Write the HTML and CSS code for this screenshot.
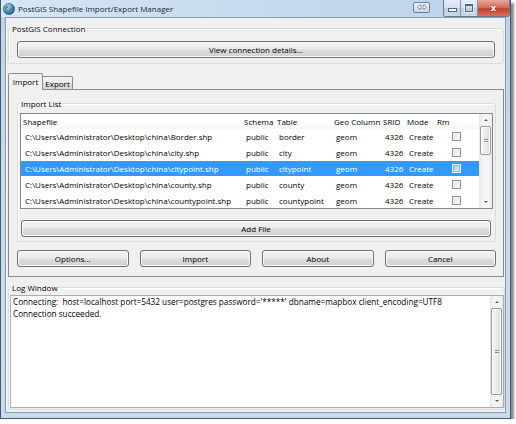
FILE: index.html
```html
<!DOCTYPE html>
<html>
<head>
<meta charset="utf-8">
<link rel="stylesheet" href="styles.css">
</head>
<body>
<div class="window">
  <div class="titlebar">
    <svg class="appicon" width="12" height="12" viewBox="0 0 12 12">
      <defs>
        <radialGradient id="g" cx="0.35" cy="0.3" r="0.8">
          <stop offset="0" stop-color="#bfe3ff"/>
          <stop offset="0.6" stop-color="#3b7fc4"/>
          <stop offset="1" stop-color="#1d4f8a"/>
        </radialGradient>
      </defs>
      <circle cx="6" cy="6" r="5.6" fill="url(#g)" stroke="#2c4f78" stroke-width="0.6"/>
      <path d="M3 3.2 C4.2 2.4 5.6 3 5.2 4.2 C4.8 5.2 3.6 5 3.4 6.2 C3.2 7.2 2.2 6.6 1.8 5.6 C1.6 4.6 2.2 3.8 3 3.2Z" fill="#4f9a3a"/>
      <path d="M6.8 5.6 C8 5.2 9.6 5.8 9.4 7.2 C9.2 8.6 7.8 9.6 7 8.8 C6.4 8 6.2 6.2 6.8 5.6Z" fill="#4f9a3a"/>
    </svg>
    <span class="title">PostGIS Shapefile Import/Export Manager</span>
    <span class="extbtn">
      <svg width="10" height="6" viewBox="0 0 10 6"><path d="M0.5 3 L3 0.5 L3 2 L7 2 L7 0.5 L9.5 3 L7 5.5 L7 4 L3 4 L3 5.5 Z" fill="#fff" stroke="#5a6b80" stroke-width="0.7"/></svg>
    </span>
    <div class="capbtns">
      <span class="cb cmin"><span class="gmin"></span></span>
      <span class="cb cmax"><span class="gmax"></span></span>
      <span class="cb cclose">x</span>
    </div>
  </div>
  <div class="client">
    <fieldset class="group conn">
      <legend>PostGIS Connection</legend>
      <div class="conn-body">
        <div class="btn">View connection details...</div>
      </div>
    </fieldset>

    <div class="tabs">
      <span class="tab sel">Import</span>
      <span class="tab">Export</span>
    </div>
    <div class="pane">
      <fieldset class="group list">
        <legend>Import List</legend>
        <div class="list-body">
          <div class="table">
            <div class="rows">
              <div class="row head">
                <span>Shapefile</span><span>Schema</span><span>Table</span><span>Geo Column</span><span>SRID</span><span>Mode</span><span>Rm</span>
              </div>
              <div class="row">
                <span>C:\Users\Administrator\Desktop\china\Border.shp</span><span>public</span><span>border</span><span>geom</span><span>4326</span><span>Create</span><span><i class="chk"></i></span>
              </div>
              <div class="row">
                <span>C:\Users\Administrator\Desktop\china\city.shp</span><span>public</span><span>city</span><span>geom</span><span>4326</span><span>Create</span><span><i class="chk"></i></span>
              </div>
              <div class="row selrow">
                <span>C:\Users\Administrator\Desktop\china\citypoint.shp</span><span>public</span><span>citypoint</span><span>geom</span><span>4326</span><span>Create</span><span><i class="chk"></i></span>
              </div>
              <div class="row">
                <span>C:\Users\Administrator\Desktop\china\county.shp</span><span>public</span><span>county</span><span>geom</span><span>4326</span><span>Create</span><span><i class="chk"></i></span>
              </div>
              <div class="row">
                <span>C:\Users\Administrator\Desktop\china\countypoint.shp</span><span>public</span><span>countypoint</span><span>geom</span><span>4326</span><span>Create</span><span><i class="chk"></i></span>
              </div>
            </div>
            <div class="vscroll small">
              <span class="arrow up"><i></i></span>
              <span class="thumb t1"><i class="grip"></i></span>
              <span class="track"></span>
              <span class="arrow down"><i></i></span>
            </div>
          </div>
          <div class="btn addfile">Add File</div>
        </div>
      </fieldset>
      <div class="btnrow">
        <div class="btn">Options...</div>
        <div class="btn">Import</div>
        <div class="btn">About</div>
        <div class="btn">Cancel</div>
      </div>
    </div>

    <fieldset class="group log">
      <legend>Log Window</legend>
      <div class="logbox">
        <div class="logtext">Connecting:  host=localhost port=5432 user=postgres password='*****' dbname=mapbox client_encoding=UTF8
Connection succeeded.</div>
        <div class="vscroll big">
          <span class="arrow up"><i></i></span>
          <span class="thumb t2"><i class="grip"></i></span>
          <span class="arrow down"><i></i></span>
        </div>
      </div>
    </fieldset>
  </div>
</div>
</body>
</html>
```

FILE: styles.css
```css
html, body {
  margin: 0;
  padding: 0;
  background: #ffffff;
}
body {
  font-family: "Open Sans", "Noto Sans", "DejaVu Sans", sans-serif;
  font-size: 8px;
  color: #000;
}
.window {
  width: 511px;
  height: 419px;
  box-sizing: border-box;
  border: 1px solid #48576a;
  border-top: none;
  background: linear-gradient(to bottom, #bcd3eb 0%, #c6daef 40%, #cadcef 100%);
  box-shadow: 3px 3px 2px rgba(0, 0, 0, 0.45);
  display: flex;
  flex-direction: column;
}
.titlebar {
  height: 17px;
  display: flex;
  align-items: center;
  padding-left: 1px;
  background: linear-gradient(to right, #d6e6f5 0%, #c9dcf0 40%, #bcd3ea 100%);
}
.appicon {
  margin-left: 1px;
  margin-right: 3px;
  flex: none;
}
.title {
  font-size: 8px;
  color: #1b2836;
  white-space: nowrap;
}
.extbtn {
  margin-left: auto;
  width: 17px;
  height: 11px;
  margin-top: -3px;
  border: 1px solid #6d7e93;
  border-radius: 2px;
  background: linear-gradient(to bottom, #eef3f9, #c8d6e6);
  display: flex;
  align-items: center;
  justify-content: center;
  box-sizing: border-box;
}
.capbtns {
  margin-left: 13px;
  display: flex;
  align-self: flex-start;
  height: 16px;
  border: 1px solid #6a7b90;
  border-top: none;
  border-radius: 0 0 3px 3px;
  overflow: hidden;
}
.cb {
  height: 16px;
  box-sizing: border-box;
  display: flex;
  align-items: center;
  justify-content: center;
}
.cmin, .cmax {
  width: 17px;
  background: linear-gradient(to bottom, #e6edf6 0%, #d3dfec 50%, #bccde1 51%, #cbd9e9 100%);
  border-right: 1px solid #8496ab;
}
.gmin {
  width: 7px;
  height: 2px;
  margin-top: 4px;
  background: #fff;
  border: 1px solid #52667f;
}
.gmax {
  width: 6px;
  height: 5px;
  border: 1px solid #52667f;
  border-top-width: 2px;
  background: transparent;
  box-shadow: 0 0 0 1px rgba(255,255,255,0.7);
}
.cclose {
  width: 31px;
  background: linear-gradient(to bottom, #e8a89c 0%, #d6715f 45%, #c1402c 55%, #d9705d 100%);
  color: #fff;
  font-family: "DejaVu Sans", sans-serif;
  font-weight: bold;
  font-size: 9px;
  line-height: 1;
  text-shadow: 0 0 2px #6b1a10;
}
.client {
  flex: 1;
  margin: 0 4px 5px 4px;
  border: 1px solid #8b9bb0;
  background: #f0f0f0;
  display: flex;
  flex-direction: column;
}

/* group boxes */
fieldset.group {
  border: 1px solid #d5dfe5;
  border-radius: 3px;
  padding: 0;
  min-width: 0;
  box-shadow: inset 1px 1px 0 #fff;
}
fieldset.group legend {
  padding: 0 1px;
  margin-left: 2px;
  line-height: 11px;
  font-size: 8px;
}
.conn {
  margin: 5px 1px 0 2px;
}
.conn-body {
  padding: 7px 8px 5px 8px;
}

/* buttons */
.btn {
  height: 17px;
  box-sizing: border-box;
  border: 1px solid #707070;
  border-radius: 3px;
  background: linear-gradient(to bottom, #f3f3f3 0%, #ebebeb 49%, #dddddd 51%, #d0d0d0 100%);
  box-shadow: inset 0 0 0 1px #fafafa;
  display: flex;
  align-items: center;
  justify-content: center;
  white-space: nowrap;
  line-height: 1;
}

/* tabs */
.tabs {
  margin: 9px 0 0 2px;
  display: flex;
  align-items: flex-end;
  height: 16px;
}
.tab {
  box-sizing: border-box;
  border: 1px solid #898c95;
  border-bottom: none;
  display: flex;
  align-items: center;
  justify-content: center;
}
.tab.sel {
  width: 35px;
  height: 17px;
  margin-bottom: -1px;
  background: #f0f0f0;
  border-radius: 2px 2px 0 0;
  position: relative;
  padding-bottom: 2px;
}
.tab:not(.sel) {
  width: 30px;
  height: 13px;
  border-left: none;
  background: linear-gradient(to bottom, #f3f3f3 0%, #ebebeb 50%, #dedede 51%, #d7d7d7 100%);
  border-radius: 0 2px 0 0;
}
.pane {
  margin: 0 1px 0 2px;
  border: 1px solid #898c95;
  background: #f0f0f0;
  display: flex;
  flex-direction: column;
}
.list {
  margin: 8px 7px 0 8px;
}
.list-body {
  padding: 4px 2px 4px 2px;
}
.table {
  height: 96px;
  box-sizing: border-box;
  border: 1px solid #828790;
  background: #fff;
  display: flex;
}
.rows {
  flex: 1;
  display: flex;
  flex-direction: column;
  min-width: 0;
}
.row {
  display: grid;
  grid-template-columns: 221px 33px 57px 49px 24px 30px 1fr;
  height: 16px;
  align-items: center;
  white-space: nowrap;
}
.row span {
  padding-left: 4px;
  overflow: hidden;
}
.row.head {
  height: 15px;
  background: linear-gradient(to bottom, #ffffff 0%, #ffffff 60%, #f5f6f7 100%);
}
.row.head span {
  padding-left: 2px;
}
.selrow {
  background: #3399ff;
  color: #fff;
}
.chk {
  display: block;
  width: 9px;
  height: 9px;
  margin-left: 13px;
  box-sizing: border-box;
  border: 1px solid #8f8f8f;
  background: linear-gradient(135deg, #d8d8d8 0%, #f4f4f4 70%, #ffffff 100%);
  box-shadow: inset 0 0 0 1px #f6f6f6;
}
.selrow .chk {
  border-color: #e8f3ff;
  background: linear-gradient(135deg, #a9d2fb 0%, #d9ecff 100%);
  box-shadow: inset 0 0 0 1px #7fbaf3;
}

/* scrollbars */
.vscroll {
  width: 13px;
  flex: none;
  display: flex;
  flex-direction: column;
  background: linear-gradient(to right, #e6e6e6 0%, #f4f4f4 30%, #f4f4f4 70%, #e9e9e9 100%);
}
.arrow {
  height: 12px;
  flex: none;
  display: flex;
  align-items: center;
  justify-content: center;
}
.arrow i {
  width: 0;
  height: 0;
  border-left: 2px solid transparent;
  border-right: 2px solid transparent;
}
.arrow.up i {
  border-bottom: 2px solid #5e5e5e;
}
.arrow.down i {
  border-top: 2px solid #5e5e5e;
}
.thumb {
  flex: none;
  margin: 0 1px;
  box-sizing: border-box;
  border: 1px solid #9a9a9a;
  border-radius: 2px;
  background: linear-gradient(to right, #f5f5f5 0%, #ececec 50%, #d9d9d9 100%);
  box-shadow: inset 0 0 0 1px #fbfbfb;
  display: flex;
  align-items: center;
  justify-content: center;
}
.grip {
  width: 4px;
  height: 4px;
  background: repeating-linear-gradient(to bottom, #8a8a8a 0, #8a8a8a 1px, #f4f4f4 1px, #f4f4f4 2px);
}
.t1 {
  height: 29px;
}
.track {
  flex: 1;
}
.vscroll.big .thumb {
  flex: 1;
}
.addfile {
  margin: 11px 2px 0 1px;
}
.btnrow {
  display: grid;
  grid-template-columns: repeat(4, 1fr);
  column-gap: 11px;
  padding: 8px 7px 9px 8px;
}

/* log */
.log {
  margin: 5px 0 0 2px;
}
.logbox {
  margin: 2px 0 1px 1px;
  height: 113px;
  box-sizing: border-box;
  border: 1px solid #abadb3;
  background: #fff;
  display: flex;
}
.logtext {
  flex: 1;
  white-space: pre;
  padding: 0 2px;
  line-height: 12px;
  overflow: hidden;
  font-size: 8.2px;
}
```
